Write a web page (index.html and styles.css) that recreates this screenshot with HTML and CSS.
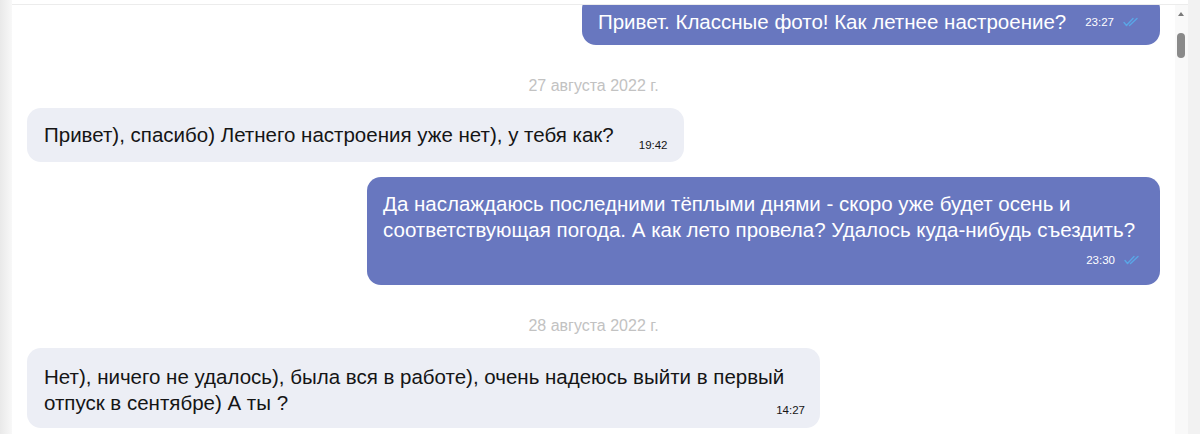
FILE: index.html
```html
<!DOCTYPE html>
<html lang="ru">
<head>
<meta charset="utf-8">
<title>Чат</title>
<link rel="stylesheet" href="styles.css">
</head>
<body>
<div class="page">
  <div class="edge-left"></div>
  <div class="chat">
    <div class="chat-top"></div>
    <div class="chat-body">
      <div class="messages">
        <div class="bubble out single first">
          <span class="text">Привет. Классные фото! Как летнее настроение?</span>
          <span class="time">23:27</span>
          <svg class="check" viewBox="0 0 17 10" width="17" height="10"><path d="M1 5.5 L3.5 8.5 L10 1.5 M6.5 8.5 L14 1.5" fill="none" stroke="#5aa6e6" stroke-width="1.4" stroke-linecap="round" stroke-linejoin="round"/></svg>
        </div>
        <div class="date">27 августа 2022 г.</div>
        <div class="bubble in single">
          <span class="text">Привет), спасибо) Летнего настроения уже нет), у тебя как?</span>
          <span class="time low">19:42</span>
        </div>
        <div class="bubble out multi gap">
          <p class="text">Да наслаждаюсь последними тёплыми днями - скоро уже будет осень и соответствующая погода. А как лето провела? Удалось куда-нибудь съездить?</p>
          <div class="meta">
            <span class="time">23:30</span>
            <svg class="check" viewBox="0 0 17 10" width="17" height="10"><path d="M1 5.5 L3.5 8.5 L10 1.5 M6.5 8.5 L14 1.5" fill="none" stroke="#5aa6e6" stroke-width="1.4" stroke-linecap="round" stroke-linejoin="round"/></svg>
          </div>
        </div>
        <div class="date">28 августа 2022 г.</div>
        <div class="bubble in multi tight">
          <p class="text">Нет), ничего не удалось), была вся в работе), очень надеюсь выйти в первый отпуск в сентябре) А ты ?</p>
          <div class="meta">
            <span class="time">14:27</span>
          </div>
        </div>
      </div>
      <div class="scrollbar">
        <div class="arrow"></div>
        <div class="thumb"></div>
      </div>
    </div>
  </div>
</div>
</body>
</html>
```

FILE: styles.css
```css
* { box-sizing: border-box; }
html, body { margin: 0; padding: 0; }
body {
  background: #f2f2f2;
  font-family: "Liberation Sans", Arial, sans-serif;
  color: #1a1a1a;
}
.page {
  display: flex;
  height: 434px;
  overflow: hidden;
}
.edge-left {
  width: 12px;
  flex: none;
  background: linear-gradient(to right, #e9e9e9, #f8f8f8);
}
.chat {
  width: 1176px;
  flex: none;
  background: #fff;
  display: flex;
  flex-direction: column;
}
.chat-top {
  height: 5px;
  border-bottom: 1px solid #ececec;
  flex: none;
}
.chat-body {
  flex: 1;
  display: flex;
  overflow: hidden;
}
.messages {
  flex: 1;
  padding: 0 15px;
  display: flex;
  flex-direction: column;
  overflow: hidden;
}
.bubble {
  max-width: 793px;
  border-radius: 14px;
  font-size: 20.5px;
  line-height: 26px;
}
.bubble .text { margin: 0; }
.bubble.out {
  align-self: flex-end;
  background: #6877bf;
  color: #fff;
}
.bubble.in {
  align-self: flex-start;
  background: #eceef5;
  color: #151515;
}
.bubble.single {
  display: flex;
  align-items: center;
}
.bubble.first {
  margin-top: -10px;
  padding: 14px 20px 10px 16px;
}
.bubble.in.single {
  align-items: flex-end;
  padding: 14px 16px 14px 17px;
}
.time {
  font-size: 11.5px;
  line-height: 14px;
  white-space: nowrap;
}
.bubble.single .time { margin-left: 19px; }
.bubble.in.single .time { margin-left: 25px; }
.time.low { margin-bottom: -4px; }
.check {
  display: block;
  flex: none;
  margin-left: 9px;
}
.bubble.multi {
  display: flex;
  flex-direction: column;
}
.bubble.out.multi {
  padding: 14px 19px 18px 16px;
}
.bubble.gap { margin-top: 15px; }
.meta {
  display: flex;
  align-items: center;
  justify-content: flex-end;
  margin-top: 10px;
  height: 14px;
}
.bubble.in.tight {
  padding: 16px 15px 11px 17px;
}
.bubble.in.tight .meta { margin-top: -13px; }
.date {
  align-self: center;
  margin: 32px 0 14px;
  font-size: 16px;
  line-height: 17px;
  color: #c2c2c2;
}
.scrollbar {
  width: 13px;
  flex: none;
  background: #f9f9f9;
  display: flex;
  flex-direction: column;
}
.arrow {
  width: 0;
  height: 0;
  margin: 7px 0 0 3px;
  border-left: 3.5px solid transparent;
  border-right: 3.5px solid transparent;
  border-bottom: 4px solid #7a7a7a;
}
.thumb {
  width: 8px;
  height: 25px;
  margin: 17px 0 0 2px;
  border-radius: 4px;
  background: #8a8a8a;
}
```
